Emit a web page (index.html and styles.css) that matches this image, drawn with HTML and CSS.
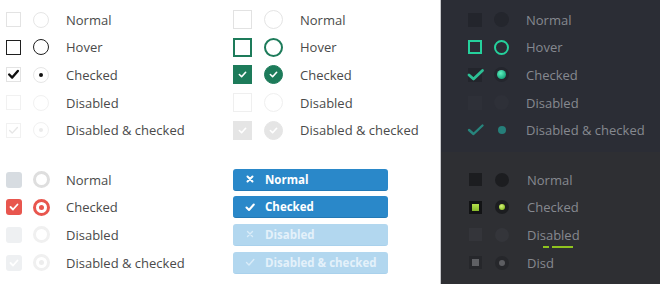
FILE: index.html
```html
<!DOCTYPE html>
<html lang="en">
<head>
    <meta charset="UTF-8">
    <meta name="viewport" content="width=device-width, initial-scale=1.0">
    <title>Checkbox and radio styles</title>
    <link rel="stylesheet" href="styles.css">
</head>
<body>

<div class="page">
    <!-- Light side: plain, green, coral and pill styles -->
    <div class="light">
        <div class="section top">
            <div class="group plain">
                <div class="row"><span class="cb"></span><span class="rd"></span><span class="label">Normal</span></div>
                <div class="row hover"><span class="cb"></span><span class="rd"></span><span class="label">Hover</span></div>
                <div class="row checked">
                    <span class="cb"><svg viewBox="0 0 15 15"><path d="M2.5 7.5 L6 11 L12.5 3.5"/></svg></span>
                    <span class="rd"><i></i></span>
                    <span class="label">Checked</span>
                </div>
                <div class="row disabled"><span class="cb"></span><span class="rd"></span><span class="label">Disabled</span></div>
                <div class="row disabled checked">
                    <span class="cb"><svg viewBox="0 0 15 15"><path d="M3 7.5 L6 10.5 L12 4"/></svg></span>
                    <span class="rd"><i></i></span>
                    <span class="label">Disabled &amp; checked</span>
                </div>
            </div>

            <div class="group green">
                <div class="row"><span class="cb"></span><span class="rd"></span><span class="label">Normal</span></div>
                <div class="row hover"><span class="cb"></span><span class="rd"></span><span class="label">Hover</span></div>
                <div class="row checked">
                    <span class="cb"><svg viewBox="0 0 19 19"><path d="M6 9.5 L8.5 12 L13 7"/></svg></span>
                    <span class="rd"><svg viewBox="0 0 19 19"><path d="M6 9.5 L8.5 12 L13 7"/></svg></span>
                    <span class="label">Checked</span>
                </div>
                <div class="row disabled"><span class="cb"></span><span class="rd"></span><span class="label">Disabled</span></div>
                <div class="row disabled checked">
                    <span class="cb"><svg viewBox="0 0 19 19"><path d="M6 9.5 L8.5 12 L13 7"/></svg></span>
                    <span class="rd"><svg viewBox="0 0 19 19"><path d="M6 9.5 L8.5 12 L13 7"/></svg></span>
                    <span class="label">Disabled &amp; checked</span>
                </div>
            </div>
        </div>

        <div class="section bottom">
            <div class="group coral">
                <div class="row"><span class="cb"></span><span class="rd"></span><span class="label">Normal</span></div>
                <div class="row checked">
                    <span class="cb"><svg viewBox="0 0 16 16"><path d="M4.5 8 L7 10.5 L11.5 5.5"/></svg></span>
                    <span class="rd"><i></i></span>
                    <span class="label">Checked</span>
                </div>
                <div class="row disabled"><span class="cb"></span><span class="rd"></span><span class="label">Disabled</span></div>
                <div class="row disabled checked">
                    <span class="cb"><svg viewBox="0 0 16 16"><path d="M4.5 8 L7 10.5 L11.5 5.5"/></svg></span>
                    <span class="rd"><i></i></span>
                    <span class="label">Disabled &amp; checked</span>
                </div>
            </div>

            <div class="group pills">
                <div class="row"><span class="pill">
                    <svg viewBox="0 0 10 10"><path d="M2.5 2.5 L7.5 7.5 M7.5 2.5 L2.5 7.5"/></svg>Normal</span></div>
                <div class="row"><span class="pill">
                    <svg viewBox="0 0 10 10"><path d="M1.5 5.5 L4 8 L8.8 2.5"/></svg>Checked</span></div>
                <div class="row"><span class="pill off">
                    <svg viewBox="0 0 10 10"><path d="M2.5 2.5 L7.5 7.5 M7.5 2.5 L2.5 7.5"/></svg>Disabled</span></div>
                <div class="row"><span class="pill off">
                    <svg viewBox="0 0 10 10"><path d="M1.5 5.5 L4 8 L8.8 2.5"/></svg>Disabled &amp; checked</span></div>
            </div>
        </div>
    </div>

    <!-- Dark side: teal and lime styles -->
    <div class="dark">
        <div class="section top">
            <div class="group teal">
                <div class="row"><span class="cb"></span><span class="rd"></span><span class="label">Normal</span></div>
                <div class="row hover"><span class="cb"></span><span class="rd"></span><span class="label">Hover</span></div>
                <div class="row checked">
                    <span class="cb"><svg viewBox="0 0 14 14"><path d="M1 7 L5.5 11 L14.5 2.5"/></svg></span>
                    <span class="rd"><i></i></span>
                    <span class="label">Checked</span>
                </div>
                <div class="row disabled"><span class="cb"></span><span class="rd"></span><span class="label">Disabled</span></div>
                <div class="row disabled checked">
                    <span class="cb"><svg viewBox="0 0 14 14"><path d="M1 7 L5.5 11 L14.5 2.5"/></svg></span>
                    <span class="rd"><i></i></span>
                    <span class="label">Disabled &amp; checked</span>
                </div>
            </div>
        </div>

        <div class="section bottom">
            <div class="group lime">
                <div class="row"><span class="cb"></span><span class="rd"></span><span class="label">Normal</span></div>
                <div class="row checked"><span class="cb"><i></i></span><span class="rd"><i></i></span><span class="label">Checked</span></div>
                <div class="row disabled"><span class="cb"></span><span class="rd"></span><span class="label typo">Disabled</span></div>
                <div class="row disabled checked"><span class="cb"><i></i></span><span class="rd"><i></i></span><span class="label">Disd</span></div>
            </div>
        </div>
    </div>
</div>

</body>
</html>
```

FILE: styles.css
```css
/* Base page */
body {
    margin: 0;
    background: #ffffff;
    font-family: "Open Sans", Arial, sans-serif;
    font-size: 13px;
    color: #4a4a4a;
    overflow: hidden;
}

.page {
    display: flex;
    width: 660px;
    height: 284px;
}

.light {
    width: 440px;
    background: #ffffff;
}

.dark {
    width: 219px;
    border-left: 1px solid #c8c9cc;
    color: #868990;
}

.section {
    display: flex;
}

.section.top {
    height: 146px;
    padding-top: 6px;
}

.section.bottom {
    height: 118px;
    padding-top: 14px;
}

.dark .section.top {
    background: #2b2d35;
}

.dark .section.bottom {
    background: #2e2f33;
}

.group {
    display: flex;
    flex-direction: column;
}

.row {
    display: flex;
    align-items: center;
    height: 27.6px;
}

.cb,
.rd {
    display: flex;
    align-items: center;
    justify-content: center;
    box-sizing: border-box;
    flex: none;
}

.rd {
    border-radius: 50%;
}

.cb svg,
.rd svg {
    fill: none;
    stroke-linecap: round;
    stroke-linejoin: round;
}

.label {
    white-space: nowrap;
}

/* Plain black style */
.plain {
    width: 227px;
    padding-left: 6px;
}

.plain .cb {
    width: 15px;
    height: 15px;
    border: 1px solid #e3e3e3;
    margin-right: 12px;
    overflow: visible;
}

.plain .rd {
    width: 16px;
    height: 16px;
    border: 1px solid #e6e6e6;
    margin-right: 17px;
}

.plain .hover .cb,
.plain .hover .rd {
    border: 1.5px solid #1f1f1f;
}

.plain .cb svg {
    width: 15px;
    height: 15px;
    stroke: #111;
    stroke-width: 2.8;
}

.plain .rd i {
    width: 4px;
    height: 4px;
    border-radius: 50%;
    background: #111;
}

.plain .disabled .cb,
.plain .disabled .rd {
    border-color: #f1f1f1;
}

.plain .disabled .cb svg {
    stroke: #e6e6e6;
    stroke-width: 1.6;
}

.plain .disabled .rd i {
    background: #eaeaea;
}

/* Green style */
.green {
    width: 207px;
}

.green .cb {
    width: 19px;
    height: 19px;
    border: 1.5px solid #e2e2e2;
    margin-right: 12px;
}

.green .rd {
    width: 19px;
    height: 19px;
    border: 1.5px solid #e4e4e4;
    margin-right: 17px;
}

.green .hover .cb,
.green .hover .rd {
    border: 2px solid #1d7b5a;
}

.green .checked .cb,
.green .checked .rd {
    background: #1d7b5a;
    border-color: #1d7b5a;
}

.green svg {
    width: 19px;
    height: 19px;
    stroke: #ffffff;
    stroke-width: 1.8;
}

.green .disabled .cb,
.green .disabled .rd {
    border-color: #efefef;
}

.green .disabled.checked .cb,
.green .disabled.checked .rd {
    background: #e5e5e5;
    border-color: #e5e5e5;
}

/* Coral style */
.coral {
    width: 227px;
    padding-left: 6px;
}

.coral .cb {
    width: 16px;
    height: 16px;
    border-radius: 3px;
    background: #d7dce1;
    margin-right: 11px;
}

.coral .rd {
    width: 17px;
    height: 17px;
    border: 3px solid #dedede;
    margin-right: 16px;
}

.coral .checked .cb {
    background: #e8564e;
}

.coral .checked .rd {
    border-color: #e8564e;
}

.coral .rd i {
    width: 5px;
    height: 5px;
    border-radius: 50%;
    background: #e8564e;
}

.coral svg {
    width: 16px;
    height: 16px;
    stroke: #ffffff;
    stroke-width: 1.8;
}

.coral .disabled .cb {
    background: #eef0f2;
}

.coral .disabled .rd {
    border-color: #f0f0f0;
}

.coral .disabled .rd i {
    background: #ededed;
}

/* Blue pill toggles */
.pills {
    width: 207px;
}

.pill {
    display: flex;
    align-items: center;
    box-sizing: border-box;
    width: 155px;
    height: 22px;
    border-radius: 3px;
    background: #2a88c9;
    border-bottom: 1px solid #2379b5;
    color: #ffffff;
    font-weight: 700;
    font-size: 11.5px;
    padding-left: 12px;
}

.pill svg {
    width: 10px;
    height: 10px;
    margin-right: 10px;
    fill: none;
    stroke: #ffffff;
    stroke-width: 2;
    stroke-linecap: round;
    stroke-linejoin: round;
}

.pill.off {
    background: #b2d7ef;
    border-bottom-color: #a9d1ec;
    color: #e4f1fa;
}

.pill.off svg {
    stroke: #d9ecf8;
    stroke-width: 1.4;
}

/* Teal dark style */
.teal {
    padding-left: 27px;
}

.teal .cb {
    width: 14px;
    height: 14px;
    background: #23252c;
    margin-right: 12px;
}

.teal .rd {
    width: 15px;
    height: 15px;
    background: #24262d;
    margin-right: 17px;
}

.teal .hover .cb,
.teal .hover .rd {
    background: transparent;
    border: 2px solid #25d19c;
}

.teal svg {
    width: 14px;
    height: 14px;
    overflow: visible;
    stroke: #2dbf95;
    stroke-width: 2.8;
}

.teal .rd i {
    width: 9px;
    height: 9px;
    border-radius: 50%;
    background: radial-gradient(circle at 40% 35%, #5ff0bf, #1ba97f 70%);
}

.teal .disabled .cb,
.teal .disabled .rd {
    background: #2e3038;
}

.teal .disabled.checked .cb,
.teal .disabled.checked .rd {
    background: transparent;
}

.teal .disabled svg {
    stroke: #27857d;
    stroke-width: 2.4;
}

.teal .disabled .rd i {
    width: 8px;
    height: 8px;
    background: #267f7a;
}

/* Lime dark style */
.lime {
    padding-left: 28px;
}

.lime .cb {
    width: 13px;
    height: 13px;
    background: #1c1d20;
    margin-right: 13px;
}

.lime .rd {
    width: 14px;
    height: 14px;
    background: #1c1d20;
    margin-right: 18px;
}

.lime .checked .cb {
    background: #121315;
}

.lime .cb i {
    width: 7px;
    height: 7px;
    background: linear-gradient(#b5e04c, #86b82a);
}

.lime .rd i {
    width: 6px;
    height: 6px;
    border-radius: 50%;
    background: radial-gradient(circle at 40% 35%, #d6f37a, #8fc22a 70%);
}

.lime .disabled .cb,
.lime .disabled .rd {
    background: #34353a;
}

.lime .disabled.checked .cb {
    background: #26272b;
}

.lime .disabled.checked .rd {
    background: #26272b;
}

.lime .disabled .cb i {
    background: #5f6064;
}

.lime .disabled .rd i {
    background: #5d5e62;
}

/* Green spelling-style underline under one label */
.typo {
    position: relative;
}

.typo::after {
    content: "";
    position: absolute;
    left: 16px;
    top: 20px;
    width: 30px;
    height: 2px;
    background: linear-gradient(to right, #8fc31f 0, #8fc31f 6px, transparent 6px, transparent 9px, #8fc31f 9px);
}
```
